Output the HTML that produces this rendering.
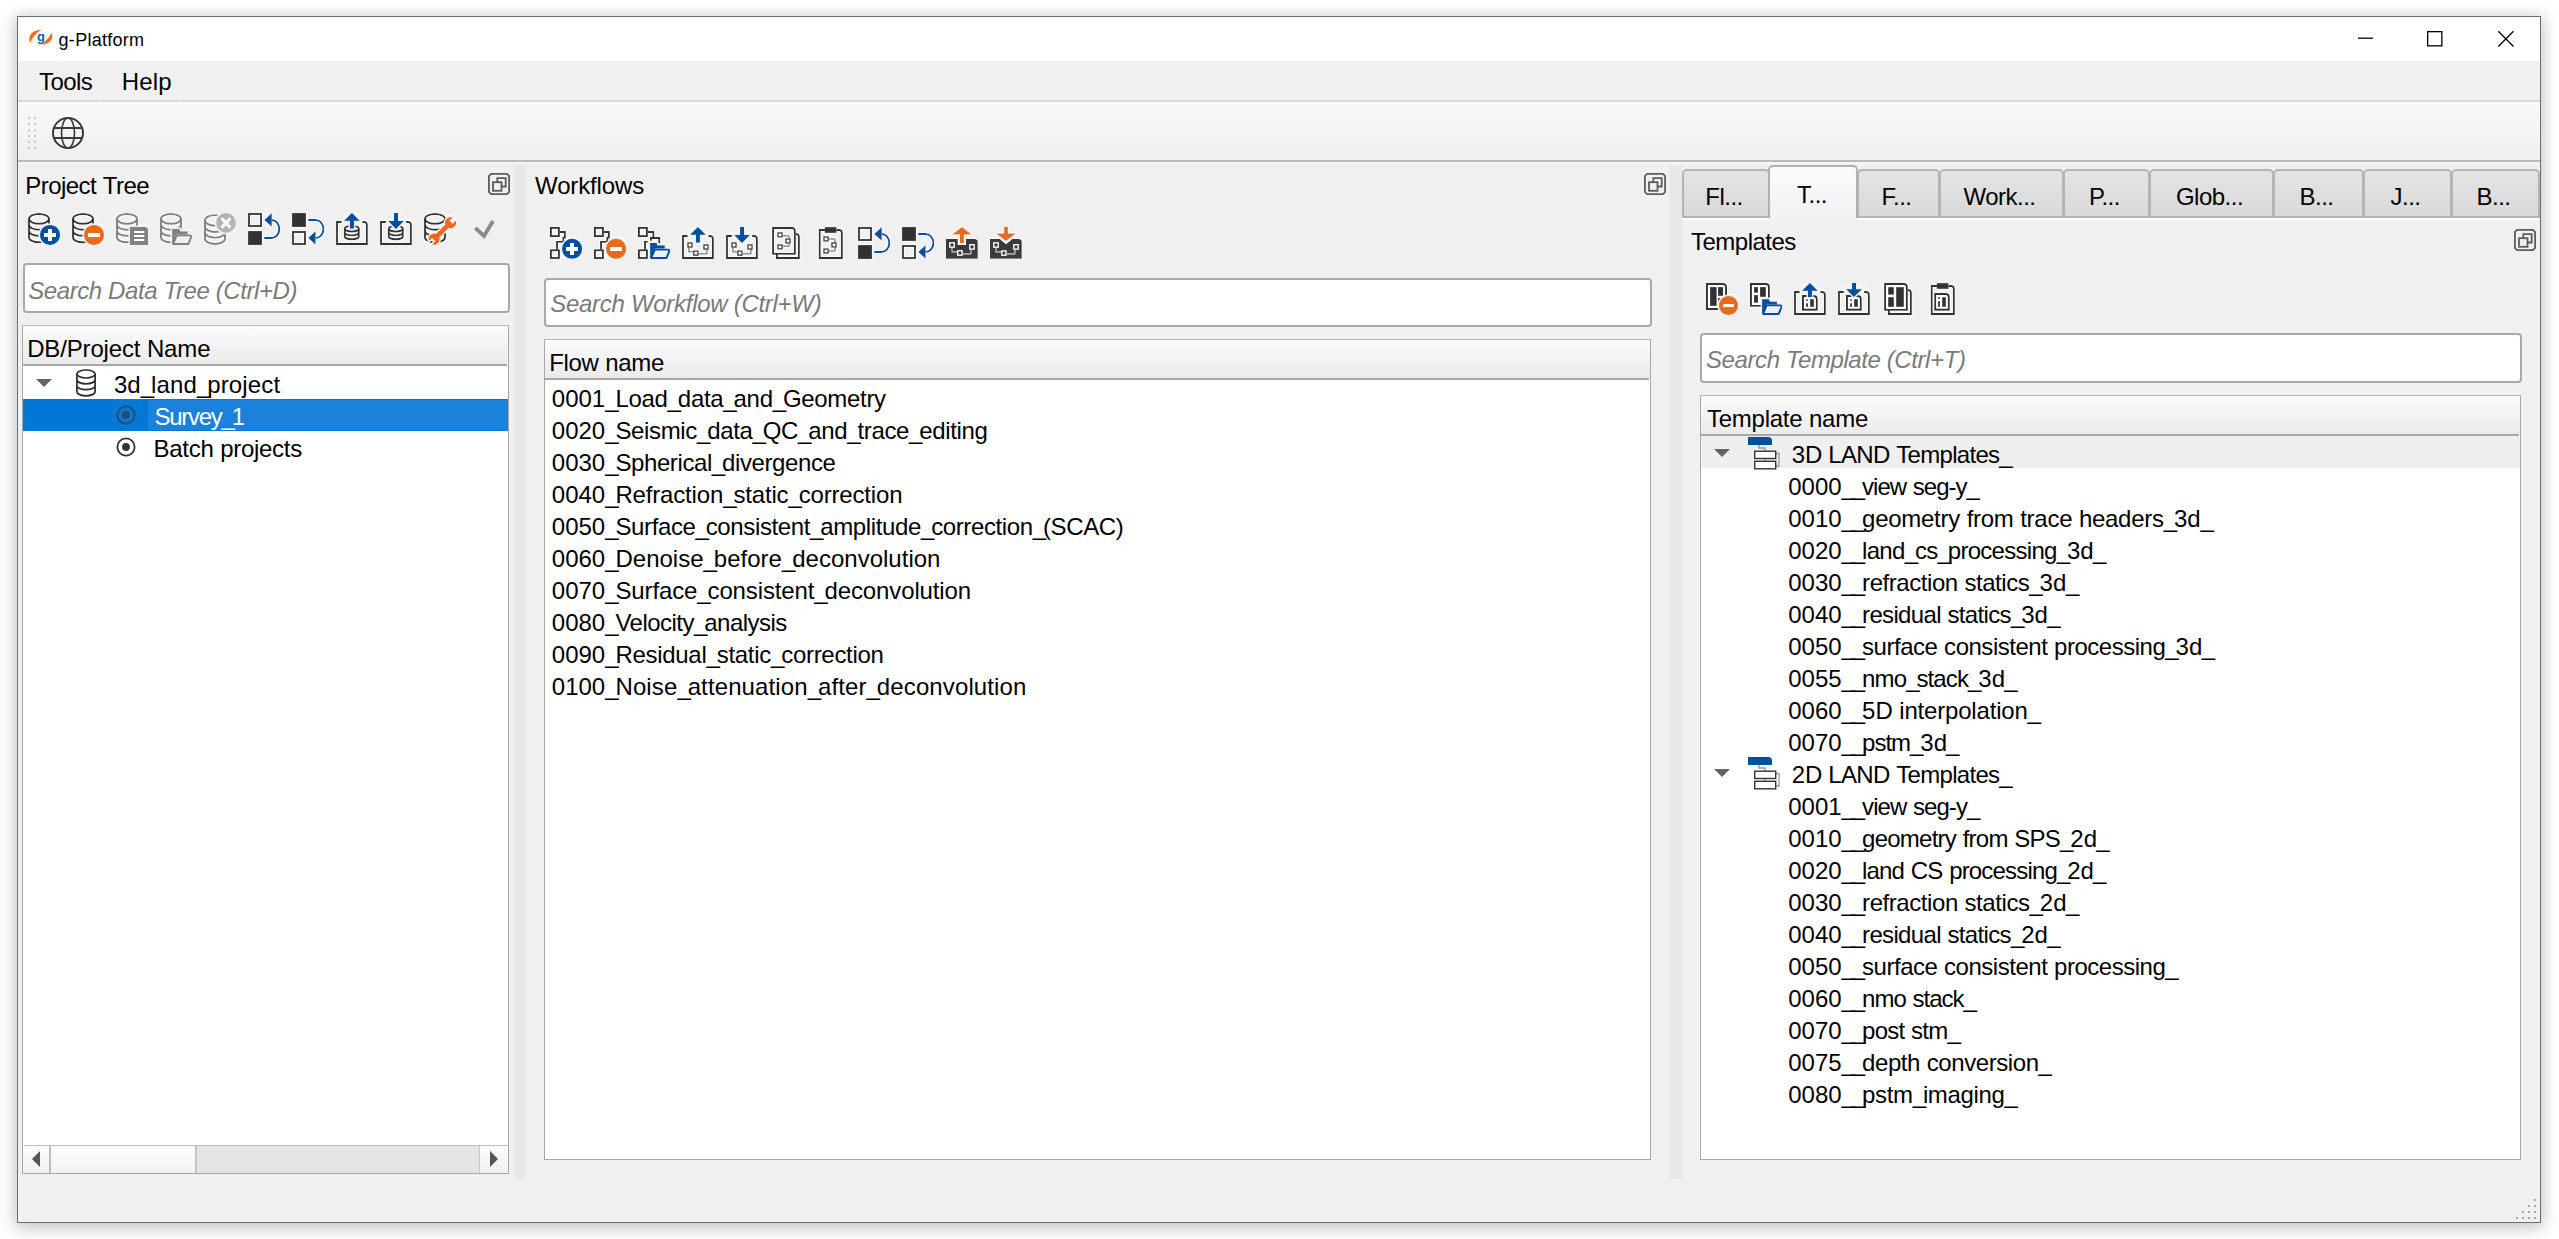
<!DOCTYPE html><html><head><meta charset="utf-8"><title>g-Platform</title><style>
*{margin:0;padding:0;box-sizing:border-box}
html,body{width:2559px;height:1239px;overflow:hidden;background:#fff;font-family:"Liberation Sans",sans-serif}
.a{position:absolute}
.t{position:absolute;white-space:pre}
</style></head><body>
<svg width="0" height="0" style="position:absolute"><defs><filter id="halo" x="-10%" y="-10%" width="120%" height="120%"><feMorphology operator="dilate" radius="1" in="SourceAlpha" result="d"/><feFlood flood-color="#ffffff" flood-opacity="0.6"/><feComposite in2="d" operator="in" result="w"/><feMerge><feMergeNode in="w"/><feMergeNode in="SourceGraphic"/></feMerge></filter></defs></svg><div class="a" style="left:17px;top:16px;width:2524px;height:1207px;background:#f0f0f0;border:1px solid #6e6e6e;box-shadow:0 3px 15px 2px rgba(0,0,0,0.24)"></div>
<div class="a" style="left:18px;top:17px;width:2522px;height:44px;background:#fff"></div>
<svg class="a" style="left:29px;top:28px" width="24" height="20" viewBox="0 0 24 20"><path d="M1.1 14.7C-1.5 8.5 3 1.5 12.6 2.1C7.5 4.5 4.5 8.5 1.1 14.7Z" fill="#f26c12"/><path d="M22.7 4.8C25.3 10.8 20.8 17.8 8 17.2C16.3 14.8 19.3 10.8 22.7 4.8Z" fill="#f26c12"/><text x="12" y="12.6" font-size="13" font-weight="bold" fill="#1061ad" stroke="#fff" stroke-width="1.4" paint-order="stroke" text-anchor="middle" font-family="Liberation Sans">g</text></svg>
<div class="t" style="left:58.60px;top:31px;font-size:18px;line-height:18px;color:#000;"><span style="letter-spacing:0.267px">g-Platform</span></div>
<svg class="a" style="left:2357px;top:36px" width="17" height="4" viewBox="0 0 17 4"><path d="M1 2.2H16" stroke="#000" stroke-width="1.3"/></svg>
<svg class="a" style="left:2426px;top:30px" width="18" height="18" viewBox="0 0 18 18"><rect x="1.65" y="1.65" width="14.2" height="14.2" fill="none" stroke="#000" stroke-width="1.3"/></svg>
<svg class="a" style="left:2497px;top:30px" width="18" height="18" viewBox="0 0 18 18"><path d="M1.3 1.3L16.5 16.5M16.5 1.3L1.3 16.5" stroke="#000" stroke-width="1.3"/></svg>
<div class="a" style="left:18px;top:61px;width:2522px;height:39px;background:#f0f0f0"></div>
<div class="a" style="left:18px;top:100px;width:2522px;height:2px;background:#d8d8d8"></div>
<div class="a" style="left:100px;top:100px;width:1px;height:2px;background:#ececec"></div>
<div class="a" style="left:179px;top:100px;width:1px;height:2px;background:#ececec"></div>
<div class="t" style="left:39.10px;top:70px;font-size:24px;line-height:24px;color:#000;"><span style="letter-spacing:-0.575px">Tools</span></div>
<div class="t" style="left:121.80px;top:70px;font-size:24px;line-height:24px;color:#000;"><span style="letter-spacing:0.167px">Help</span></div>
<div class="a" style="left:18px;top:102px;width:2522px;height:58px;background:linear-gradient(#f9f9f9,#efefef)"></div>
<div class="a" style="left:18px;top:160px;width:2522px;height:2px;background:#b9b9b9"></div>
<div class="a" style="left:18px;top:162px;width:2522px;height:2px;background:#f6f6f6"></div>
<svg class="a" style="left:28px;top:117px" width="10" height="34" viewBox="0 0 10 34"><rect x="0" y="0" width="2" height="2" fill="#c8c8c8"/><rect x="6" y="0" width="2" height="2" fill="#c8c8c8"/><rect x="0" y="6" width="2" height="2" fill="#c8c8c8"/><rect x="6" y="6" width="2" height="2" fill="#c8c8c8"/><rect x="0" y="12" width="2" height="2" fill="#c8c8c8"/><rect x="6" y="12" width="2" height="2" fill="#c8c8c8"/><rect x="0" y="18" width="2" height="2" fill="#c8c8c8"/><rect x="6" y="18" width="2" height="2" fill="#c8c8c8"/><rect x="0" y="24" width="2" height="2" fill="#c8c8c8"/><rect x="6" y="24" width="2" height="2" fill="#c8c8c8"/><rect x="0" y="30" width="2" height="2" fill="#c8c8c8"/><rect x="6" y="30" width="2" height="2" fill="#c8c8c8"/></svg>
<svg class="a" style="left:52px;top:117px" width="32" height="32" viewBox="0 0 32 32"><g fill="none" stroke="#3a3a3a" stroke-width="2"><circle cx="16" cy="16" r="15"/><ellipse cx="16" cy="16" rx="6.5" ry="15" stroke-width="1.6"/><path d="M2 11H30M2 21H30"/></g></svg>
<div class="a" style="left:514px;top:165px;width:12px;height:1014px;background:#e8e8e8"></div>
<div class="a" style="left:1670px;top:165px;width:12px;height:1014px;background:#e8e8e8"></div>
<svg class="a" style="left:488px;top:173px" width="22" height="22" viewBox="0 0 22 22"><g fill="none" stroke="#5f5b57" stroke-width="1.8"><path d="M3 0.9H19L21.1 3V19L19 21.1H3L0.9 19V3Z"/><rect x="5" y="9.2" width="8.5" height="8.6"/><path d="M9.3 9.2V5.1H17.7V13.5H13.5"/></g></svg>
<svg class="a" style="left:1644px;top:173px" width="22" height="22" viewBox="0 0 22 22"><g fill="none" stroke="#5f5b57" stroke-width="1.8"><path d="M3 0.9H19L21.1 3V19L19 21.1H3L0.9 19V3Z"/><rect x="5" y="9.2" width="8.5" height="8.6"/><path d="M9.3 9.2V5.1H17.7V13.5H13.5"/></g></svg>
<svg class="a" style="left:2514px;top:229px" width="22" height="22" viewBox="0 0 22 22"><g fill="none" stroke="#5f5b57" stroke-width="1.8"><path d="M3 0.9H19L21.1 3V19L19 21.1H3L0.9 19V3Z"/><rect x="5" y="9.2" width="8.5" height="8.6"/><path d="M9.3 9.2V5.1H17.7V13.5H13.5"/></g></svg>
<div class="t" style="left:25.30px;top:174px;font-size:24px;line-height:24px;color:#000;"><span style="letter-spacing:-0.550px">Project</span><span style="letter-spacing:0.000px"> </span><span style="letter-spacing:-0.550px">Tree</span></div>
<svg class="a" style="left:28px;top:213px" width="32" height="32" viewBox="0 0 32 32"><g filter="url(#halo)"><g fill="none" stroke="#333335" stroke-width="1.9"><ellipse cx="11" cy="5.85" rx="10" ry="4.9"/><path d="M1 5.85V24.4A10 4.9 0 0 0 21 24.4V5.85M1 11.8A10 4.9 0 0 0 21 11.8M1 17.9A10 4.9 0 0 0 21 17.9"/></g><circle cx="22" cy="21.9" r="11.6" fill="#f0f0f0"/><circle cx="22" cy="21.9" r="10" fill="#0050a0"/><path d="M20 16H24V20H28V24H24V28H20V24H16V20H20Z" fill="#fff"/></g></svg>
<svg class="a" style="left:72px;top:213px" width="32" height="32" viewBox="0 0 32 32"><g filter="url(#halo)"><g fill="none" stroke="#333335" stroke-width="1.9"><ellipse cx="11" cy="5.85" rx="10" ry="4.9"/><path d="M1 5.85V24.4A10 4.9 0 0 0 21 24.4V5.85M1 11.8A10 4.9 0 0 0 21 11.8M1 17.9A10 4.9 0 0 0 21 17.9"/></g><circle cx="22" cy="21.9" r="11.6" fill="#f0f0f0"/><circle cx="22" cy="21.9" r="10" fill="#ea691e"/><rect x="16" y="20" width="12" height="4" fill="#fff"/></g></svg>
<svg class="a" style="left:116px;top:213px" width="32" height="32" viewBox="0 0 32 32"><g filter="url(#halo)"><g fill="none" stroke="#808080" stroke-width="1.9"><ellipse cx="11" cy="5.85" rx="10" ry="4.9"/><path d="M1 5.85V24.4A10 4.9 0 0 0 21 24.4V5.85M1 11.8A10 4.9 0 0 0 21 11.8M1 17.9A10 4.9 0 0 0 21 17.9"/></g><path d="M12.5 12.5H28.5Q33.5 12.5 33.5 17.5V33.5H12.5Z" fill="#f0f0f0"/><path d="M14 14H28.4Q32 14 32 17.6V32H14Z" fill="#808080"/><path d="M18 19H28.3M18 23H28.3M18 27H28.3" stroke="#fff" stroke-width="1.9"/></g></svg>
<svg class="a" style="left:160px;top:213px" width="32" height="32" viewBox="0 0 32 32"><g filter="url(#halo)"><g fill="none" stroke="#808080" stroke-width="1.9"><ellipse cx="11" cy="5.85" rx="10" ry="4.9"/><path d="M1 5.85V24.4A10 4.9 0 0 0 21 24.4V5.85M1 11.8A10 4.9 0 0 0 21 11.8M1 17.9A10 4.9 0 0 0 21 17.9"/></g><path d="M10.5 14.5H21L22 17H29Q33.5 17 33.5 21V33.5H10.5Z" fill="#f0f0f0"/><path d="M12.2 16.1H19.2L20.3 18.5H27.5V21.5H16L13.8 31H12.2Z" fill="#808080"/><path d="M16.6 22.4H29.6Q31.6 22.4 31 24.3L28.3 31H13.2Z" fill="#f0f0f0" stroke="#808080" stroke-width="1.9" stroke-linejoin="round"/></g></svg>
<svg class="a" style="left:204px;top:213px" width="32" height="32" viewBox="0 0 32 32"><g filter="url(#halo)"><g fill="none" stroke="#808080" stroke-width="1.9"><ellipse cx="11" cy="7.4" rx="10" ry="5.3"/><path d="M1 7.4V25.7A10 5.3 0 0 0 21 25.7V19.3M1 13.7A10 5.3 0 0 0 21 13.7M1 19.3A10 5.3 0 0 0 21 19.3"/></g><circle cx="22" cy="9.9" r="11.4" fill="#f0f0f0"/><circle cx="22" cy="9.9" r="9.8" fill="#b3b3b3"/><path d="M17.6 5.2L26.4 14.6M26.4 5.2L17.6 14.6" stroke="#fff" stroke-width="3"/></g></svg>
<svg class="a" style="left:248px;top:213px" width="32" height="32" viewBox="0 0 32 32"><g filter="url(#halo)"><rect x="1" y="1" width="12" height="12" fill="none" stroke="#333335" stroke-width="1.9"/><rect x="1" y="19" width="12" height="12" fill="#333335" stroke="#333335" stroke-width="1.9"/><path d="M16.2 24.9H23.6A7.7 8.9 0 0 0 23.6 7.1" fill="none" stroke="#0050a0" stroke-width="2"/><path d="M16.2 6.95L23.8 0.1V13.8Z" fill="#0050a0"/></g></svg>
<svg class="a" style="left:292px;top:213px" width="32" height="32" viewBox="0 0 32 32"><g filter="url(#halo)"><rect x="1" y="1" width="12" height="12" fill="#333335" stroke="#333335" stroke-width="1.9"/><rect x="1" y="19" width="12" height="12" fill="none" stroke="#333335" stroke-width="1.9"/><path d="M16.2 7.1H23.6A7.8 8.9 0 0 1 23.6 24.9" fill="none" stroke="#0050a0" stroke-width="2"/><path d="M16.2 24.9L23.6 18V31.8Z" fill="#0050a0"/></g></svg>
<svg class="a" style="left:336px;top:213px" width="32" height="32" viewBox="0 0 32 32"><g filter="url(#halo)"><path d="M5.9 9H1V31H30.9V12Q30.9 9 27.9 9H26.1" fill="none" stroke="#333335" stroke-width="1.9"/><g fill="none" stroke="#333335" stroke-width="1.9"><ellipse cx="15.8" cy="15.7" rx="7" ry="2.8"/><path d="M8.8 15.7V23.5A7 2.8 0 0 0 22.8 23.5V15.7M8.8 19.6A7 2.8 0 0 0 22.8 19.6"/></g><path d="M15.95 0L23.7 7.85H17.9V15.6H14V7.85H8.2Z" fill="#f0f0f0" stroke="#f0f0f0" stroke-width="3"/><path d="M15.95 0L23.7 7.85H17.9V15.6H14V7.85H8.2Z" fill="#0050a0"/></g></svg>
<svg class="a" style="left:380px;top:213px" width="32" height="32" viewBox="0 0 32 32"><g filter="url(#halo)"><path d="M5.9 9H1V31H30.9V12Q30.9 9 27.9 9H26.1" fill="none" stroke="#333335" stroke-width="1.9"/><g fill="none" stroke="#333335" stroke-width="1.9"><ellipse cx="15.8" cy="15.7" rx="7" ry="2.8"/><path d="M8.8 15.7V23.5A7 2.8 0 0 0 22.8 23.5V15.7M8.8 19.6A7 2.8 0 0 0 22.8 19.6"/></g><path d="M15.95 15.9L23.8 8.1H18V0H14.1V8.1H8.3Z" fill="#f0f0f0" stroke="#f0f0f0" stroke-width="3"/><path d="M15.95 15.9L23.8 8.1H18V0H14.1V8.1H8.3Z" fill="#0050a0"/></g></svg>
<svg class="a" style="left:424px;top:213px" width="32" height="32" viewBox="0 0 32 32"><g filter="url(#halo)"><g fill="none" stroke="#333335" stroke-width="1.9"><ellipse cx="11" cy="5.85" rx="10" ry="4.9"/><path d="M1 5.85V24.4A10 4.9 0 0 0 21 24.4V5.85M1 11.8A10 4.9 0 0 0 21 11.8M1 17.9A10 4.9 0 0 0 21 17.9"/></g><g transform="translate(18.35 17.9) rotate(-45)" fill="#f0f0f0" stroke="#f0f0f0" stroke-width="3"><rect x="-11.6" y="-2.3" width="23.2" height="4.6"/><path d="M16.60 -2.3A5.5 5.5 0 1 0 16.60 2.3L12.2 2.3L12.2 -2.3Z"/><path d="M-16.60 -2.3A5.5 5.5 0 1 1 -16.60 2.3L-12.2 2.3L-12.2 -2.3Z"/></g><g transform="translate(18.35 17.9) rotate(-45)" fill="#ea691e" ><rect x="-11.6" y="-2.3" width="23.2" height="4.6"/><path d="M16.60 -2.3A5.5 5.5 0 1 0 16.60 2.3L12.2 2.3L12.2 -2.3Z"/><path d="M-16.60 -2.3A5.5 5.5 0 1 1 -16.60 2.3L-12.2 2.3L-12.2 -2.3Z"/></g></g></svg>
<svg class="a" style="left:470px;top:213px" width="32" height="32" viewBox="0 0 32 32"><path d="M5.3 14.8L14 23L23 8" fill="none" stroke="#8a8a8a" stroke-width="3.8"/></svg>
<div class="a" style="left:23px;top:263px;width:487px;height:50px;background:#fff;border:2px solid #a9a9a9;border-radius:4px"></div>
<div class="t" style="left:28.20px;top:279px;font-size:24px;line-height:24px;color:#7a7a7a;font-style:italic;"><span style="letter-spacing:-0.404px">Search Data Tree (Ctrl+D)</span></div>
<div class="a" style="left:22px;top:325px;width:487px;height:849px;background:#fff;border:1px solid #a8a8a8;border-top-color:#bababa"></div>
<div class="a" style="left:23px;top:326px;width:485px;height:38px;background:linear-gradient(#fbfbfb,#ebebeb)"></div>
<div class="a" style="left:23px;top:364px;width:484px;height:2px;background:#a8a8a8"></div>
<div class="t" style="left:27.20px;top:337px;font-size:24px;line-height:24px;color:#000;"><span style="letter-spacing:-0.162px">DB/Project</span><span style="letter-spacing:0.000px"> </span><span style="letter-spacing:-0.162px">Name</span></div>
<svg class="a" style="left:36px;top:379px" width="16" height="9" viewBox="0 0 16 9"><path d="M0 0H16L8 8Z" fill="#636363"/></svg>
<svg class="a" style="left:76px;top:369px" width="20" height="29" viewBox="0 0 20 29"><g fill="none" stroke="#2e2e30" stroke-width="1.7"><ellipse cx="10" cy="5" rx="9.1" ry="4"/><path d="M0.9 5V22.8A9.1 4 0 0 0 19.1 22.8V5M0.9 10.8A9.1 4 0 0 0 19.1 10.8M0.9 16.7A9.1 4 0 0 0 19.1 16.7"/></g></svg>
<div class="t" style="left:113.90px;top:373px;font-size:24px;line-height:24px;color:#000;"><span style="letter-spacing:0.000px">3</span><span style="letter-spacing:0.145px">d</span><span style="letter-spacing:-3.100px">_</span><span style="letter-spacing:0.145px">land</span><span style="letter-spacing:-3.100px">_</span><span style="letter-spacing:0.145px">project</span></div>
<div class="a" style="left:23px;top:399px;width:485px;height:32px;background:#0078d7"></div>
<div class="a" style="left:148px;top:400px;width:360px;height:30px;background:#1a82da"></div>
<svg class="a" style="left:116px;top:405px" width="20" height="20" viewBox="0 0 20 20"><circle cx="10" cy="10" r="8.6" fill="none" stroke="#2f4a66" stroke-width="1.8"/><circle cx="10" cy="10" r="3.9" fill="#2f4a66"/></svg>
<div class="t" style="left:154.60px;top:405px;font-size:24px;line-height:24px;color:#fff;"><span style="letter-spacing:-1.300px">Survey</span><span style="letter-spacing:-3.100px">_</span><span style="letter-spacing:0.000px">1</span></div>
<svg class="a" style="left:116px;top:437px" width="20" height="20" viewBox="0 0 20 20"><circle cx="10" cy="10" r="8.6" fill="none" stroke="#333" stroke-width="1.8"/><circle cx="10" cy="10" r="3.9" fill="#333"/></svg>
<div class="t" style="left:153.60px;top:437px;font-size:24px;line-height:24px;color:#000;"><span style="letter-spacing:-0.292px">Batch</span><span style="letter-spacing:0.000px"> </span><span style="letter-spacing:-0.292px">projects</span></div>
<div class="a" style="left:23px;top:1145px;width:485px;height:28px;background:#f0f0f0"></div>
<div class="a" style="left:23px;top:1146px;width:26px;height:27px;background:linear-gradient(#fdfdfd,#f0f0f0)"></div>
<div class="a" style="left:480px;top:1146px;width:28px;height:27px;background:linear-gradient(#fdfdfd,#f0f0f0)"></div>
<div class="a" style="left:24px;top:1145px;width:484px;height:1px;background:#bdbdbd"></div>
<div class="a" style="left:49px;top:1146px;width:2px;height:27px;background:#bdbdbd"></div>
<div class="a" style="left:51px;top:1146px;width:144px;height:27px;background:linear-gradient(#fdfdfd,#f1f1f1)"></div>
<div class="a" style="left:195px;top:1146px;width:2px;height:27px;background:#c4c4c4"></div>
<div class="a" style="left:197px;top:1146px;width:282px;height:27px;background:#e4e4e4"></div>
<div class="a" style="left:479px;top:1146px;width:1px;height:27px;background:#c8c8c8"></div>
<svg class="a" style="left:32px;top:1151px" width="9" height="16" viewBox="0 0 9 16"><path d="M8 0V16L0 8Z" fill="#555"/></svg>
<svg class="a" style="left:490px;top:1151px" width="9" height="16" viewBox="0 0 9 16"><path d="M0 0V16L8 8Z" fill="#555"/></svg>
<div class="t" style="left:535.10px;top:174px;font-size:24px;line-height:24px;color:#000;"><span style="letter-spacing:-0.150px">Workflows</span></div>
<svg class="a" style="left:550px;top:227px" width="32" height="32" viewBox="0 0 32 32"><g filter="url(#halo)"><g fill="none" stroke="#333335" stroke-width="1.9"><rect x="0.95" y="0.95" width="8" height="8.1"/><rect x="0.95" y="23.2" width="8" height="7.8"/><path d="M9.9 5H14.9V10.6H13.3V14.9H7V22.4"/></g><circle cx="22.1" cy="21.85" r="11.6" fill="#f0f0f0"/><circle cx="22.1" cy="21.85" r="10" fill="#0050a0"/><path d="M20.1 16H24V20H28V24H24V28H20V24H16V20H20Z" fill="#fff"/></g></svg>
<svg class="a" style="left:594px;top:227px" width="32" height="32" viewBox="0 0 32 32"><g filter="url(#halo)"><g fill="none" stroke="#333335" stroke-width="1.9"><rect x="0.95" y="0.95" width="8" height="8.1"/><rect x="0.95" y="23.2" width="8" height="7.8"/><path d="M9.9 5H14.9V10.6H13.3V14.9H7V22.4"/></g><circle cx="22.1" cy="21.85" r="11.6" fill="#f0f0f0"/><circle cx="22.1" cy="21.85" r="10" fill="#ea691e"/><rect x="16" y="20" width="12" height="4" fill="#fff"/></g></svg>
<svg class="a" style="left:638px;top:227px" width="32" height="32" viewBox="0 0 32 32"><g filter="url(#halo)"><g fill="none" stroke="#333335" stroke-width="1.9"><rect x="0.95" y="0.95" width="8" height="8.1"/><rect x="0.95" y="23.2" width="8" height="7.8"/><path d="M9.9 5H15.3V11M12.9 13.7V11H21.2V16.4M9.8 14.9H7V22.4"/></g><path d="M10.7 14.6H20L21 17H28Q33.5 17 33.5 22V33.5H10.7Z" fill="#f0f0f0"/><path d="M12.2 16.1H18.5L19.5 18.5H26.7V21.5H16.5L14 31H12.2Z" fill="#0050a0"/><path d="M16.8 22.6H29.8Q31.8 22.6 31.2 24.5L28.4 31H13.2Z" fill="#f0f0f0" stroke="#0050a0" stroke-width="1.9" stroke-linejoin="round"/></g></svg>
<svg class="a" style="left:682px;top:227px" width="32" height="32" viewBox="0 0 32 32"><g filter="url(#halo)"><path d="M5.9 9H1V31H30.9V12Q30.9 9 27.9 9H26.1" fill="none" stroke="#333335" stroke-width="1.9"/><path d="M6.9 20.8V24.8H11.1M16.7 26.7H24.9V22.6" fill="none" stroke="#8c8c8c" stroke-width="1.6" stroke-linejoin="round"/><g fill="#fff" stroke="#333335" stroke-width="1.35"><rect x="5.9" y="15.9" width="4.2" height="4.2"/><rect x="21.9" y="17.9" width="4.2" height="4.2"/><rect x="11.8" y="24" width="4.2" height="4.2"/></g><path d="M15.95 0L23.7 7.85H17.9V15.6H14V7.85H8.2Z" fill="#f0f0f0" stroke="#f0f0f0" stroke-width="3"/><path d="M15.95 0L23.7 7.85H17.9V15.6H14V7.85H8.2Z" fill="#0050a0"/></g></svg>
<svg class="a" style="left:726px;top:227px" width="32" height="32" viewBox="0 0 32 32"><g filter="url(#halo)"><path d="M5.9 9H1V31H30.9V12Q30.9 9 27.9 9H26.1" fill="none" stroke="#333335" stroke-width="1.9"/><path d="M6.9 20.8V24.8H11.1M16.7 26.7H24.9V22.6" fill="none" stroke="#8c8c8c" stroke-width="1.6" stroke-linejoin="round"/><g fill="#fff" stroke="#333335" stroke-width="1.35"><rect x="5.9" y="15.9" width="4.2" height="4.2"/><rect x="21.9" y="17.9" width="4.2" height="4.2"/><rect x="11.8" y="24" width="4.2" height="4.2"/></g><path d="M15.95 15.9L23.8 8.1H18V0H14.1V8.1H8.3Z" fill="#f0f0f0" stroke="#f0f0f0" stroke-width="3"/><path d="M15.95 15.9L23.8 8.1H18V0H14.1V8.1H8.3Z" fill="#0050a0"/></g></svg>
<svg class="a" style="left:770px;top:227px" width="32" height="32" viewBox="0 0 32 32"><g filter="url(#halo)"><path d="M6.9 27V31H28.9V10Q28.9 7 25.9 7" fill="none" stroke="#333335" stroke-width="1.9"/><path d="M3.05 1.05H21.9Q24.9 1.05 24.9 4.05V26.9H3.05Z" fill="none" stroke="#333335" stroke-width="1.9"/><path d="M12.8 8.7H18.3Q19 8.7 19 9.4V11.3M12.8 19.2H18.3Q19 19.2 19 18.5V16.7" fill="none" stroke="#8c8c8c" stroke-width="1.6"/><g fill="#fff" stroke="#333335" stroke-width="1.35"><rect x="7.9" y="5.9" width="4.2" height="4"/><rect x="15.9" y="12" width="4.2" height="4"/><rect x="7.9" y="17.9" width="4.2" height="4"/></g></g></svg>
<svg class="a" style="left:814px;top:227px" width="32" height="32" viewBox="0 0 32 32"><g filter="url(#halo)"><path d="M11 3.05H5.75V31H27.9V6.05Q27.9 3.05 24.9 3.05H22.6" fill="none" stroke="#333335" stroke-width="1.9"/><rect x="10.8" y="0.1" width="11.8" height="5.8" fill="#333335"/><path d="M14.8 12H20.3Q21 12 21 12.7V15.2M14.8 24H20.3Q21 24 21 23.3V20.6" fill="none" stroke="#8c8c8c" stroke-width="1.6"/><g fill="#fff" stroke="#333335" stroke-width="1.35"><rect x="9.9" y="9.9" width="4.2" height="4.1"/><rect x="17.9" y="15.9" width="4.2" height="4.1"/><rect x="9.9" y="22" width="4.2" height="4.1"/></g></g></svg>
<svg class="a" style="left:858px;top:227px" width="32" height="32" viewBox="0 0 32 32"><g filter="url(#halo)"><rect x="1" y="1" width="12" height="12" fill="none" stroke="#333335" stroke-width="1.9"/><rect x="1" y="19" width="12" height="12" fill="#333335" stroke="#333335" stroke-width="1.9"/><path d="M16.2 24.9H23.6A7.7 8.9 0 0 0 23.6 7.1" fill="none" stroke="#0050a0" stroke-width="2"/><path d="M16.2 6.95L23.8 0.1V13.8Z" fill="#0050a0"/></g></svg>
<svg class="a" style="left:902px;top:227px" width="32" height="32" viewBox="0 0 32 32"><g filter="url(#halo)"><rect x="1" y="1" width="12" height="12" fill="#333335" stroke="#333335" stroke-width="1.9"/><rect x="1" y="19" width="12" height="12" fill="none" stroke="#333335" stroke-width="1.9"/><path d="M16.2 7.1H23.6A7.8 8.9 0 0 1 23.6 24.9" fill="none" stroke="#0050a0" stroke-width="2"/><path d="M16.2 24.9L23.6 18V31.8Z" fill="#0050a0"/></g></svg>
<svg class="a" style="left:946px;top:227px" width="32" height="32" viewBox="0 0 32 32"><g filter="url(#halo)"><path d="M0 12.1H11.8V18H20V12.1H28.8Q31.8 12.1 31.8 15.1V31.8H0Z" fill="#3a3a3c"/><path d="M6 20.8V24.9H11M17 26.9H24.9V22.8" fill="none" stroke="#aaaaaa" stroke-width="1.6" stroke-linejoin="round"/><g fill="#3a3a3c" stroke="#fff" stroke-width="1.35"><rect x="3.8" y="15.8" width="4.4" height="4.4"/><rect x="23.8" y="17.7" width="4.4" height="4.4"/><rect x="11.7" y="23.8" width="4.4" height="4.4"/></g><path d="M15.95 0L25.6 7.5H17.9V15.9H14V7.5H6.2Z" fill="#ea691e"/></g></svg>
<svg class="a" style="left:990px;top:227px" width="32" height="32" viewBox="0 0 32 32"><g filter="url(#halo)"><path d="M0 12.1H10.5L16.05 16.6L21.6 12.1H28.8Q31.8 12.1 31.8 15.1V31.8H0Z" fill="#3a3a3c"/><path d="M6 20.8V24.9H11M17 26.9H24.9V22.8" fill="none" stroke="#aaaaaa" stroke-width="1.6" stroke-linejoin="round"/><g fill="#3a3a3c" stroke="#fff" stroke-width="1.35"><rect x="3.8" y="15.8" width="4.4" height="4.4"/><rect x="23.8" y="17.7" width="4.4" height="4.4"/><rect x="11.8" y="24" width="4.2" height="4.2"/></g><path d="M10.5 12.1L16.05 16.6L21.6 12.1" fill="none" stroke="#fff" stroke-width="1.2"/><path d="M15.95 14.1L25.7 6.5H17.9V0H14.1V6.5H6.2Z" fill="#ea691e"/></g></svg>
<div class="a" style="left:544px;top:278px;width:1108px;height:49px;background:#fff;border:2px solid #a9a9a9;border-radius:4px"></div>
<div class="t" style="left:550.20px;top:292px;font-size:24px;line-height:24px;color:#7a7a7a;font-style:italic;"><span style="letter-spacing:-0.283px">Search Workflow (Ctrl+W)</span></div>
<div class="a" style="left:544px;top:339px;width:1107px;height:821px;background:#fff;border:1px solid #a8a8a8;border-top-color:#bababa"></div>
<div class="a" style="left:545px;top:340px;width:1105px;height:38px;background:linear-gradient(#fbfbfb,#ebebeb)"></div>
<div class="a" style="left:545px;top:378px;width:1104px;height:2px;background:#a8a8a8"></div>
<div class="t" style="left:549.20px;top:351px;font-size:24px;line-height:24px;color:#000;"><span style="letter-spacing:-0.329px">Flow</span><span style="letter-spacing:0.000px"> </span><span style="letter-spacing:-0.329px">name</span></div>
<div class="t" style="left:551.80px;top:387px;font-size:24px;line-height:24px;color:#000;"><span style="letter-spacing:0.000px">0001</span><span style="letter-spacing:-3.100px">_</span><span style="letter-spacing:-0.311px">Load</span><span style="letter-spacing:-3.100px">_</span><span style="letter-spacing:-0.311px">data</span><span style="letter-spacing:-3.100px">_</span><span style="letter-spacing:-0.311px">and</span><span style="letter-spacing:-3.100px">_</span><span style="letter-spacing:-0.311px">Geometry</span></div>
<div class="t" style="left:551.80px;top:419px;font-size:24px;line-height:24px;color:#000;"><span style="letter-spacing:0.000px">0020</span><span style="letter-spacing:-3.100px">_</span><span style="letter-spacing:-0.359px">Seismic</span><span style="letter-spacing:-3.100px">_</span><span style="letter-spacing:-0.359px">data</span><span style="letter-spacing:-3.100px">_</span><span style="letter-spacing:-0.359px">QC</span><span style="letter-spacing:-3.100px">_</span><span style="letter-spacing:-0.359px">and</span><span style="letter-spacing:-3.100px">_</span><span style="letter-spacing:-0.359px">trace</span><span style="letter-spacing:-3.100px">_</span><span style="letter-spacing:-0.359px">editing</span></div>
<div class="t" style="left:551.80px;top:451px;font-size:24px;line-height:24px;color:#000;"><span style="letter-spacing:0.000px">0030</span><span style="letter-spacing:-3.100px">_</span><span style="letter-spacing:-0.406px">Spherical</span><span style="letter-spacing:-3.100px">_</span><span style="letter-spacing:-0.406px">divergence</span></div>
<div class="t" style="left:551.80px;top:483px;font-size:24px;line-height:24px;color:#000;"><span style="letter-spacing:0.000px">0040</span><span style="letter-spacing:-3.100px">_</span><span style="letter-spacing:-0.168px">Refraction</span><span style="letter-spacing:-3.100px">_</span><span style="letter-spacing:-0.168px">static</span><span style="letter-spacing:-3.100px">_</span><span style="letter-spacing:-0.168px">correction</span></div>
<div class="t" style="left:551.80px;top:515px;font-size:24px;line-height:24px;color:#000;"><span style="letter-spacing:0.000px">0050</span><span style="letter-spacing:-3.100px">_</span><span style="letter-spacing:-0.380px">Surface</span><span style="letter-spacing:-3.100px">_</span><span style="letter-spacing:-0.380px">consistent</span><span style="letter-spacing:-3.100px">_</span><span style="letter-spacing:-0.380px">amplitude</span><span style="letter-spacing:-3.100px">_</span><span style="letter-spacing:-0.380px">correction</span><span style="letter-spacing:-3.100px">_</span><span style="letter-spacing:-0.380px">(SCAC)</span></div>
<div class="t" style="left:551.80px;top:547px;font-size:24px;line-height:24px;color:#000;"><span style="letter-spacing:0.000px">0060</span><span style="letter-spacing:-3.100px">_</span><span style="letter-spacing:0.012px">Denoise</span><span style="letter-spacing:-3.100px">_</span><span style="letter-spacing:0.012px">before</span><span style="letter-spacing:-3.100px">_</span><span style="letter-spacing:0.012px">deconvolution</span></div>
<div class="t" style="left:551.80px;top:579px;font-size:24px;line-height:24px;color:#000;"><span style="letter-spacing:0.000px">0070</span><span style="letter-spacing:-3.100px">_</span><span style="letter-spacing:-0.128px">Surface</span><span style="letter-spacing:-3.100px">_</span><span style="letter-spacing:-0.128px">consistent</span><span style="letter-spacing:-3.100px">_</span><span style="letter-spacing:-0.128px">deconvolution</span></div>
<div class="t" style="left:551.80px;top:611px;font-size:24px;line-height:24px;color:#000;"><span style="letter-spacing:0.000px">0080</span><span style="letter-spacing:-3.100px">_</span><span style="letter-spacing:-0.520px">Velocity</span><span style="letter-spacing:-3.100px">_</span><span style="letter-spacing:-0.520px">analysis</span></div>
<div class="t" style="left:551.80px;top:643px;font-size:24px;line-height:24px;color:#000;"><span style="letter-spacing:0.000px">0090</span><span style="letter-spacing:-3.100px">_</span><span style="letter-spacing:-0.296px">Residual</span><span style="letter-spacing:-3.100px">_</span><span style="letter-spacing:-0.296px">static</span><span style="letter-spacing:-3.100px">_</span><span style="letter-spacing:-0.296px">correction</span></div>
<div class="t" style="left:551.80px;top:675px;font-size:24px;line-height:24px;color:#000;"><span style="letter-spacing:0.000px">0100</span><span style="letter-spacing:-3.100px">_</span><span style="letter-spacing:0.118px">Noise</span><span style="letter-spacing:-3.100px">_</span><span style="letter-spacing:0.118px">attenuation</span><span style="letter-spacing:-3.100px">_</span><span style="letter-spacing:0.118px">after</span><span style="letter-spacing:-3.100px">_</span><span style="letter-spacing:0.118px">deconvolution</span></div>
<div class="a" style="left:1682px;top:216px;width:857px;height:2px;background:#b4b4b4"></div>
<div class="a" style="left:1682px;top:218px;width:857px;height:2px;background:#fff"></div>
<div class="a" style="left:1682px;top:169px;width:88px;height:49px;background:linear-gradient(#e4e4e4,#d9d9d9);border:2px solid #b4b4b4;border-radius:5px 5px 0 0"></div>
<div class="t" style="left:1680px;width:88px;top:185px;font-size:24px;line-height:24px;text-align:center;letter-spacing:-0.5px">Fl...</div>
<div class="a" style="left:1857px;top:169px;width:83px;height:49px;background:linear-gradient(#e4e4e4,#d9d9d9);border:2px solid #b4b4b4;border-radius:5px 5px 0 0"></div>
<div class="t" style="left:1855px;width:83px;top:185px;font-size:24px;line-height:24px;text-align:center;letter-spacing:-0.5px">F...</div>
<div class="a" style="left:1939px;top:169px;width:125px;height:49px;background:linear-gradient(#e4e4e4,#d9d9d9);border:2px solid #b4b4b4;border-radius:5px 5px 0 0"></div>
<div class="t" style="left:1937px;width:125px;top:185px;font-size:24px;line-height:24px;text-align:center;letter-spacing:-0.5px">Work...</div>
<div class="a" style="left:2063px;top:169px;width:87px;height:49px;background:linear-gradient(#e4e4e4,#d9d9d9);border:2px solid #b4b4b4;border-radius:5px 5px 0 0"></div>
<div class="t" style="left:2061px;width:87px;top:185px;font-size:24px;line-height:24px;text-align:center;letter-spacing:-0.5px">P...</div>
<div class="a" style="left:2149px;top:169px;width:125px;height:49px;background:linear-gradient(#e4e4e4,#d9d9d9);border:2px solid #b4b4b4;border-radius:5px 5px 0 0"></div>
<div class="t" style="left:2147px;width:125px;top:185px;font-size:24px;line-height:24px;text-align:center;letter-spacing:-0.5px">Glob...</div>
<div class="a" style="left:2273px;top:169px;width:91px;height:49px;background:linear-gradient(#e4e4e4,#d9d9d9);border:2px solid #b4b4b4;border-radius:5px 5px 0 0"></div>
<div class="t" style="left:2271px;width:91px;top:185px;font-size:24px;line-height:24px;text-align:center;letter-spacing:-0.5px">B...</div>
<div class="a" style="left:2363px;top:169px;width:89px;height:49px;background:linear-gradient(#e4e4e4,#d9d9d9);border:2px solid #b4b4b4;border-radius:5px 5px 0 0"></div>
<div class="t" style="left:2361px;width:89px;top:185px;font-size:24px;line-height:24px;text-align:center;letter-spacing:-0.5px">J...</div>
<div class="a" style="left:2451px;top:169px;width:89px;height:49px;background:linear-gradient(#e4e4e4,#d9d9d9);border:2px solid #b4b4b4;border-radius:5px 5px 0 0"></div>
<div class="t" style="left:2449px;width:89px;top:185px;font-size:24px;line-height:24px;text-align:center;letter-spacing:-0.5px">B...</div>
<div class="a" style="left:1768px;top:165px;width:90px;height:55px;background:linear-gradient(#fbfbfb,#f1f1f1);border:2px solid #b0b0b0;border-bottom:none;border-radius:5px 5px 0 0"></div>
<div class="a" style="left:1768px;top:218px;width:90px;height:2px;background:#f1f1f1"></div>
<div class="t" style="left:1767px;width:90px;top:183px;font-size:24px;line-height:24px;text-align:center;letter-spacing:-0.5px">T...</div>
<div class="t" style="left:1690.90px;top:230px;font-size:24px;line-height:24px;color:#000;"><span style="letter-spacing:-0.488px">Templates</span></div>
<svg class="a" style="left:1706px;top:283px" width="32" height="32" viewBox="0 0 32 32"><g filter="url(#halo)"><path d="M0.95 0.95H17Q20.05 0.95 20.05 4V25.95H0.95Z" fill="#fff" stroke="#333335" stroke-width="1.9"/><rect x="4.1" y="4.1" width="6.5" height="18.7" fill="#333335"/><rect x="12.1" y="4.1" width="4.9" height="8.7" fill="#333335"/><rect x="12.1" y="15" width="4.9" height="7.8" fill="#333335"/><circle cx="22.5" cy="22.5" r="11.1" fill="#f0f0f0"/><circle cx="22.5" cy="22.5" r="9.5" fill="#ea691e"/><rect x="17.2" y="21.1" width="10.8" height="3" fill="#fff"/></g></svg>
<svg class="a" style="left:1750px;top:283px" width="32" height="32" viewBox="0 0 32 32"><g filter="url(#halo)"><path d="M0.95 0.95H15.899999999999999Q18.95 0.95 18.95 4V22.85H0.95Z" fill="#fff" stroke="#333335" stroke-width="1.9"/><rect x="4.1" y="4.1" width="3.8" height="5.6" fill="#333335"/><rect x="4.1" y="12.1" width="3.8" height="7.6" fill="#333335"/><rect x="10.1" y="4.1" width="5.7" height="9.7" fill="#333335"/><path d="M10.7 14.6H20L21 17H28Q33.5 17 33.5 22V33.5H10.7Z" fill="#f0f0f0"/><path d="M12.1 16.2H18.9L19.9 18.7H26.9V21.5H16.5L14 31H12.1Z" fill="#0050a0"/><path d="M16.6 22.4H30Q32 22.4 31.4 24.3L28.5 31H13.2Z" fill="#f0f0f0" stroke="#0050a0" stroke-width="1.9" stroke-linejoin="round"/></g></svg>
<svg class="a" style="left:1794px;top:283px" width="32" height="32" viewBox="0 0 32 32"><g filter="url(#halo)"><path d="M5.9 9H1V31H30.9V12Q30.9 9 27.9 9H26.1" fill="none" stroke="#333335" stroke-width="1.9"/><path d="M8.95 13.05H19.8Q22.85 13.05 22.85 16.1V26.75H8.95Z" fill="#fff" stroke="#333335" stroke-width="1.9"/><rect x="12.1" y="16.4" width="1.8" height="1.4" fill="#333335"/><rect x="12.1" y="20.3" width="1.8" height="3.5" fill="#333335"/><rect x="16.2" y="16.2" width="3.6" height="7.6" fill="#333335"/><path d="M15.95 0L23.7 7.85H17.9V13.9H14V7.85H8.2Z" fill="#f0f0f0" stroke="#f0f0f0" stroke-width="3"/><path d="M15.95 0L23.7 7.85H17.9V13.9H14V7.85H8.2Z" fill="#0050a0"/></g></svg>
<svg class="a" style="left:1838px;top:283px" width="32" height="32" viewBox="0 0 32 32"><g filter="url(#halo)"><path d="M5.9 9H1V31H30.9V12Q30.9 9 27.9 9H26.1" fill="none" stroke="#333335" stroke-width="1.9"/><path d="M8.95 13.05H19.8Q22.85 13.05 22.85 16.1V26.75H8.95Z" fill="#fff" stroke="#333335" stroke-width="1.9"/><rect x="12.1" y="16.4" width="1.8" height="1.4" fill="#333335"/><rect x="12.1" y="20.3" width="1.8" height="3.5" fill="#333335"/><rect x="16.2" y="16.2" width="3.6" height="7.6" fill="#333335"/><path d="M15.95 13.9L23.8 6.2H18V0H14.1V6.2H8.3Z" fill="#f0f0f0" stroke="#f0f0f0" stroke-width="3"/><path d="M15.95 13.9L23.8 6.2H18V0H14.1V6.2H8.3Z" fill="#0050a0"/></g></svg>
<svg class="a" style="left:1882px;top:283px" width="32" height="32" viewBox="0 0 32 32"><g filter="url(#halo)"><path d="M6.9 27V31H28.9V10Q28.9 7 25.9 7" fill="none" stroke="#333335" stroke-width="1.9"/><path d="M3.05 1.05H21.9Q24.9 1.05 24.9 4.05V26.9H3.05Z" fill="#fff" stroke="#333335" stroke-width="1.9"/><rect x="6.2" y="4.2" width="5.6" height="7.4" fill="#333335"/><rect x="6.2" y="14.2" width="5.6" height="9.6" fill="#333335"/><rect x="14.2" y="4.2" width="7.6" height="19.6" fill="#333335"/></g></svg>
<svg class="a" style="left:1926px;top:283px" width="32" height="32" viewBox="0 0 32 32"><g filter="url(#halo)"><path d="M11 3.05H5.75V31H27.9V6.05Q27.9 3.05 24.9 3.05H22.6" fill="none" stroke="#333335" stroke-width="1.9"/><rect x="10.8" y="0.1" width="11.8" height="5.8" fill="#333335"/><path d="M9.15 11.05H19.8Q22.85 11.05 22.85 14.1V26.75H9.15Z" fill="#fff" stroke="#333335" stroke-width="1.9"/><rect x="12.1" y="14.2" width="1.8" height="1.7" fill="#333335"/><rect x="12.1" y="18.2" width="1.8" height="5.6" fill="#333335"/><rect x="16.2" y="14.2" width="3.6" height="9.6" fill="#333335"/></g></svg>
<div class="a" style="left:1700px;top:333px;width:822px;height:50px;background:#fff;border:2px solid #a9a9a9;border-radius:4px"></div>
<div class="t" style="left:1706.00px;top:348px;font-size:24px;line-height:24px;color:#7a7a7a;font-style:italic;"><span style="letter-spacing:-0.404px">Search Template (Ctrl+T)</span></div>
<div class="a" style="left:1700px;top:395px;width:821px;height:765px;background:#fff;border:1px solid #a8a8a8;border-top-color:#bababa"></div>
<div class="a" style="left:1701px;top:396px;width:819px;height:38px;background:linear-gradient(#fbfbfb,#ebebeb)"></div>
<div class="a" style="left:1701px;top:434px;width:818px;height:2px;background:#a8a8a8"></div>
<div class="t" style="left:1707.00px;top:407px;font-size:24px;line-height:24px;color:#000;"><span style="letter-spacing:-0.255px">Template</span><span style="letter-spacing:0.000px"> </span><span style="letter-spacing:-0.255px">name</span></div>
<div class="a" style="left:1701px;top:436px;width:819px;height:32px;background:#efefef"></div>
<svg class="a" style="left:1714px;top:449px" width="16" height="9" viewBox="0 0 16 9"><path d="M0 0H16L8 8Z" fill="#636363"/></svg>
<svg class="a" style="left:1747px;top:436px" width="34" height="34" viewBox="0 0 34 34"><path d="M1 1H21Q25 1 25 5V9H1Z" fill="#0050a0"/><g fill="none" stroke="#999" stroke-width="1.3"><path d="M12 9V12H18V15M18 22.6V25.3M28.7 17.5H32V30H28.7"/></g><g fill="#fff" stroke="#333" stroke-width="1.4"><rect x="7.7" y="15.2" width="21" height="7.3"/><rect x="7.7" y="25.3" width="21" height="7.5"/></g></svg>
<div class="t" style="left:1791.70px;top:443px;font-size:24px;line-height:24px;color:#000;"><span style="letter-spacing:0.000px">3</span><span style="letter-spacing:-0.700px">D</span><span style="letter-spacing:0.000px"> </span><span style="letter-spacing:-0.700px">LAND</span><span style="letter-spacing:0.000px"> </span><span style="letter-spacing:-0.700px">Templates</span><span style="letter-spacing:-3.100px">_</span></div>
<div class="t" style="left:1788.20px;top:475px;font-size:24px;line-height:24px;color:#000;"><span style="letter-spacing:0.000px">0000</span><span style="letter-spacing:-3.100px">__</span><span style="letter-spacing:-0.989px">view</span><span style="letter-spacing:0.000px"> </span><span style="letter-spacing:-0.989px">seg-y</span><span style="letter-spacing:-3.100px">_</span></div>
<div class="t" style="left:1788.20px;top:507px;font-size:24px;line-height:24px;color:#000;"><span style="letter-spacing:0.000px">0010</span><span style="letter-spacing:-3.100px">__</span><span style="letter-spacing:-0.272px">geometry</span><span style="letter-spacing:0.000px"> </span><span style="letter-spacing:-0.272px">from</span><span style="letter-spacing:0.000px"> </span><span style="letter-spacing:-0.272px">trace</span><span style="letter-spacing:0.000px"> </span><span style="letter-spacing:-0.272px">headers</span><span style="letter-spacing:-3.100px">_</span><span style="letter-spacing:0.000px">3</span><span style="letter-spacing:-0.272px">d</span><span style="letter-spacing:-3.100px">_</span></div>
<div class="t" style="left:1788.20px;top:539px;font-size:24px;line-height:24px;color:#000;"><span style="letter-spacing:0.000px">0020</span><span style="letter-spacing:-3.100px">__</span><span style="letter-spacing:-0.706px">land</span><span style="letter-spacing:-3.100px">_</span><span style="letter-spacing:-0.706px">cs</span><span style="letter-spacing:-3.100px">_</span><span style="letter-spacing:-0.706px">processing</span><span style="letter-spacing:-3.100px">_</span><span style="letter-spacing:0.000px">3</span><span style="letter-spacing:-0.706px">d</span><span style="letter-spacing:-3.100px">_</span></div>
<div class="t" style="left:1788.20px;top:571px;font-size:24px;line-height:24px;color:#000;"><span style="letter-spacing:0.000px">0030</span><span style="letter-spacing:-3.100px">__</span><span style="letter-spacing:-0.439px">refraction</span><span style="letter-spacing:0.000px"> </span><span style="letter-spacing:-0.439px">statics</span><span style="letter-spacing:-3.100px">_</span><span style="letter-spacing:0.000px">3</span><span style="letter-spacing:-0.439px">d</span><span style="letter-spacing:-3.100px">_</span></div>
<div class="t" style="left:1788.20px;top:603px;font-size:24px;line-height:24px;color:#000;"><span style="letter-spacing:0.000px">0040</span><span style="letter-spacing:-3.100px">__</span><span style="letter-spacing:-0.662px">residual</span><span style="letter-spacing:0.000px"> </span><span style="letter-spacing:-0.662px">statics</span><span style="letter-spacing:-3.100px">_</span><span style="letter-spacing:0.000px">3</span><span style="letter-spacing:-0.662px">d</span><span style="letter-spacing:-3.100px">_</span></div>
<div class="t" style="left:1788.20px;top:635px;font-size:24px;line-height:24px;color:#000;"><span style="letter-spacing:0.000px">0050</span><span style="letter-spacing:-3.100px">__</span><span style="letter-spacing:-0.479px">surface</span><span style="letter-spacing:0.000px"> </span><span style="letter-spacing:-0.479px">consistent</span><span style="letter-spacing:0.000px"> </span><span style="letter-spacing:-0.479px">processing</span><span style="letter-spacing:-3.100px">_</span><span style="letter-spacing:0.000px">3</span><span style="letter-spacing:-0.479px">d</span><span style="letter-spacing:-3.100px">_</span></div>
<div class="t" style="left:1788.20px;top:667px;font-size:24px;line-height:24px;color:#000;"><span style="letter-spacing:0.000px">0055</span><span style="letter-spacing:-3.100px">__</span><span style="letter-spacing:-0.867px">nmo</span><span style="letter-spacing:-3.100px">_</span><span style="letter-spacing:-0.867px">stack</span><span style="letter-spacing:-3.100px">_</span><span style="letter-spacing:0.000px">3</span><span style="letter-spacing:-0.867px">d</span><span style="letter-spacing:-3.100px">_</span></div>
<div class="t" style="left:1788.20px;top:699px;font-size:24px;line-height:24px;color:#000;"><span style="letter-spacing:0.000px">0060</span><span style="letter-spacing:-3.100px">__</span><span style="letter-spacing:0.000px">5</span><span style="letter-spacing:-0.186px">D</span><span style="letter-spacing:0.000px"> </span><span style="letter-spacing:-0.186px">interpolation</span><span style="letter-spacing:-3.100px">_</span></div>
<div class="t" style="left:1788.20px;top:731px;font-size:24px;line-height:24px;color:#000;"><span style="letter-spacing:0.000px">0070</span><span style="letter-spacing:-3.100px">__</span><span style="letter-spacing:-1.020px">pstm</span><span style="letter-spacing:-3.100px">_</span><span style="letter-spacing:0.000px">3</span><span style="letter-spacing:-1.020px">d</span><span style="letter-spacing:-3.100px">_</span></div>
<svg class="a" style="left:1714px;top:769px" width="16" height="9" viewBox="0 0 16 9"><path d="M0 0H16L8 8Z" fill="#636363"/></svg>
<svg class="a" style="left:1747px;top:756px" width="34" height="34" viewBox="0 0 34 34"><path d="M1 1H21Q25 1 25 5V9H1Z" fill="#0050a0"/><g fill="none" stroke="#999" stroke-width="1.3"><path d="M12 9V12H18V15M18 22.6V25.3M28.7 17.5H32V30H28.7"/></g><g fill="#fff" stroke="#333" stroke-width="1.4"><rect x="7.7" y="15.2" width="21" height="7.3"/><rect x="7.7" y="25.3" width="21" height="7.5"/></g></svg>
<div class="t" style="left:1791.70px;top:763px;font-size:24px;line-height:24px;color:#000;"><span style="letter-spacing:0.000px">2</span><span style="letter-spacing:-0.700px">D</span><span style="letter-spacing:0.000px"> </span><span style="letter-spacing:-0.700px">LAND</span><span style="letter-spacing:0.000px"> </span><span style="letter-spacing:-0.700px">Templates</span><span style="letter-spacing:-3.100px">_</span></div>
<div class="t" style="left:1788.20px;top:795px;font-size:24px;line-height:24px;color:#000;"><span style="letter-spacing:0.000px">0001</span><span style="letter-spacing:-3.100px">__</span><span style="letter-spacing:-0.944px">view</span><span style="letter-spacing:0.000px"> </span><span style="letter-spacing:-0.944px">seg-y</span><span style="letter-spacing:-3.100px">_</span></div>
<div class="t" style="left:1788.20px;top:827px;font-size:24px;line-height:24px;color:#000;"><span style="letter-spacing:0.000px">0010</span><span style="letter-spacing:-3.100px">__</span><span style="letter-spacing:-0.763px">geometry</span><span style="letter-spacing:0.000px"> </span><span style="letter-spacing:-0.763px">from</span><span style="letter-spacing:0.000px"> </span><span style="letter-spacing:-0.763px">SPS</span><span style="letter-spacing:-3.100px">_</span><span style="letter-spacing:0.000px">2</span><span style="letter-spacing:-0.763px">d</span><span style="letter-spacing:-3.100px">_</span></div>
<div class="t" style="left:1788.20px;top:859px;font-size:24px;line-height:24px;color:#000;"><span style="letter-spacing:0.000px">0020</span><span style="letter-spacing:-3.100px">__</span><span style="letter-spacing:-0.829px">land</span><span style="letter-spacing:0.000px"> </span><span style="letter-spacing:-0.829px">CS</span><span style="letter-spacing:0.000px"> </span><span style="letter-spacing:-0.829px">processing</span><span style="letter-spacing:-3.100px">_</span><span style="letter-spacing:0.000px">2</span><span style="letter-spacing:-0.829px">d</span><span style="letter-spacing:-3.100px">_</span></div>
<div class="t" style="left:1788.20px;top:891px;font-size:24px;line-height:24px;color:#000;"><span style="letter-spacing:0.000px">0030</span><span style="letter-spacing:-3.100px">__</span><span style="letter-spacing:-0.428px">refraction</span><span style="letter-spacing:0.000px"> </span><span style="letter-spacing:-0.428px">statics</span><span style="letter-spacing:-3.100px">_</span><span style="letter-spacing:0.000px">2</span><span style="letter-spacing:-0.428px">d</span><span style="letter-spacing:-3.100px">_</span></div>
<div class="t" style="left:1788.20px;top:923px;font-size:24px;line-height:24px;color:#000;"><span style="letter-spacing:0.000px">0040</span><span style="letter-spacing:-3.100px">__</span><span style="letter-spacing:-0.662px">residual</span><span style="letter-spacing:0.000px"> </span><span style="letter-spacing:-0.662px">statics</span><span style="letter-spacing:-3.100px">_</span><span style="letter-spacing:0.000px">2</span><span style="letter-spacing:-0.662px">d</span><span style="letter-spacing:-3.100px">_</span></div>
<div class="t" style="left:1788.20px;top:955px;font-size:24px;line-height:24px;color:#000;"><span style="letter-spacing:0.000px">0050</span><span style="letter-spacing:-3.100px">__</span><span style="letter-spacing:-0.481px">surface</span><span style="letter-spacing:0.000px"> </span><span style="letter-spacing:-0.481px">consistent</span><span style="letter-spacing:0.000px"> </span><span style="letter-spacing:-0.481px">processing</span><span style="letter-spacing:-3.100px">_</span></div>
<div class="t" style="left:1788.20px;top:987px;font-size:24px;line-height:24px;color:#000;"><span style="letter-spacing:0.000px">0060</span><span style="letter-spacing:-3.100px">__</span><span style="letter-spacing:-0.988px">nmo</span><span style="letter-spacing:0.000px"> </span><span style="letter-spacing:-0.988px">stack</span><span style="letter-spacing:-3.100px">_</span></div>
<div class="t" style="left:1788.20px;top:1019px;font-size:24px;line-height:24px;color:#000;"><span style="letter-spacing:0.000px">0070</span><span style="letter-spacing:-3.100px">__</span><span style="letter-spacing:-0.757px">post</span><span style="letter-spacing:0.000px"> </span><span style="letter-spacing:-0.757px">stm</span><span style="letter-spacing:-3.100px">_</span></div>
<div class="t" style="left:1788.20px;top:1051px;font-size:24px;line-height:24px;color:#000;"><span style="letter-spacing:0.000px">0075</span><span style="letter-spacing:-3.100px">__</span><span style="letter-spacing:-0.420px">depth</span><span style="letter-spacing:0.000px"> </span><span style="letter-spacing:-0.420px">conversion</span><span style="letter-spacing:-3.100px">_</span></div>
<div class="t" style="left:1788.20px;top:1083px;font-size:24px;line-height:24px;color:#000;"><span style="letter-spacing:0.000px">0080</span><span style="letter-spacing:-3.100px">__</span><span style="letter-spacing:-0.364px">pstm</span><span style="letter-spacing:-3.100px">_</span><span style="letter-spacing:-0.364px">imaging</span><span style="letter-spacing:-3.100px">_</span></div>
<svg class="a" style="left:2516px;top:1199px" width="22" height="22" viewBox="0 0 22 22"><rect x="18" y="0" width="2" height="2" fill="#a8a8a8"/><rect x="12" y="6" width="2" height="2" fill="#a8a8a8"/><rect x="18" y="6" width="2" height="2" fill="#a8a8a8"/><rect x="6" y="12" width="2" height="2" fill="#a8a8a8"/><rect x="12" y="12" width="2" height="2" fill="#a8a8a8"/><rect x="18" y="12" width="2" height="2" fill="#a8a8a8"/><rect x="0" y="18" width="2" height="2" fill="#a8a8a8"/><rect x="6" y="18" width="2" height="2" fill="#a8a8a8"/><rect x="12" y="18" width="2" height="2" fill="#a8a8a8"/><rect x="18" y="18" width="2" height="2" fill="#a8a8a8"/></svg>
</body></html>
